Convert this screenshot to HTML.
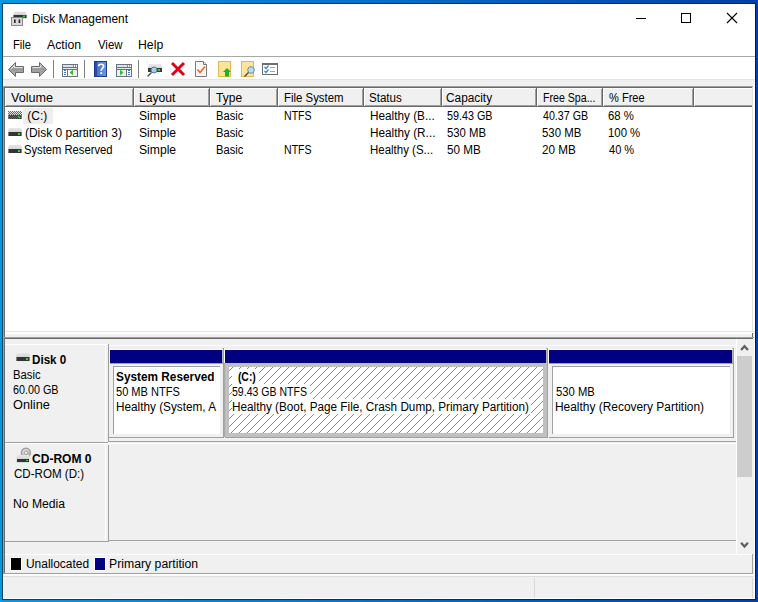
<!DOCTYPE html>
<html><head><meta charset="utf-8">
<style>
*{margin:0;padding:0;box-sizing:border-box}
html,body{width:758px;height:602px;overflow:hidden}
body{position:relative;background:linear-gradient(to right,#0898de 0%,#0674cc 45%,#0040a8 100%);font-family:"Liberation Sans",sans-serif;font-size:12px;color:#000}
.a{position:absolute}
.t{position:absolute;white-space:nowrap;line-height:15px}
.b{position:absolute;white-space:nowrap;line-height:15px;font-weight:bold}
svg{display:block}
</style></head><body>
<div class="a" style="left:2px;top:3px;width:754px;height:597px;background:#f0f0f0;border:1px solid rgba(0,0,0,0.55);background-clip:padding-box;"></div>
<div class="a" style="left:3px;top:4px;width:752px;height:595px;border:1px solid #fff;"></div>
<div class="a" style="left:3px;top:4px;width:752px;height:76px;background:#fff;"></div>
<div class="a" style="left:3px;top:56px;width:752px;height:1px;background:#a8a8a8;"></div>
<div class="a" style="left:3px;top:79px;width:752px;height:1px;background:#e3e3e3;"></div>
<svg class="a" style="left:10px;top:10px" width="18" height="17" viewBox="0 0 18 17">
<defs><linearGradient id="dt" x1="0" y1="0" x2="0" y2="1"><stop offset="0" stop-color="#e8e8e8"/><stop offset="1" stop-color="#b8b8b8"/></linearGradient></defs>
<path d="M4.5 1.5 H15.5 L16.5 3.5 V8.5 H3.5 V3.5 Z" fill="url(#dt)"/>
<rect x="3.5" y="5" width="13" height="3" fill="#333"/>
<rect x="13" y="5.5" width="2" height="2" fill="#2bd42b"/>
<rect x="1.5" y="7.5" width="11" height="8" fill="#d8d8d8" stroke="#8a8a8a" stroke-width="1"/>
<rect x="4" y="9.5" width="1.6" height="3.5" fill="#222"/>
<rect x="8.6" y="9.5" width="1.6" height="3.5" fill="#222"/>
</svg>
<div class="t" style="left:31.61px;top:12px;transform:scaleX(0.9927);transform-origin:0 0;">Disk Management</div>
<div class="a" style="left:636px;top:18px;width:10px;height:1px;background:#000;"></div>
<div class="a" style="left:681px;top:13px;width:10px;height:10px;border:1px solid #000;"></div>
<svg class="a" style="left:726px;top:12px" width="12" height="12" viewBox="0 0 12 12"><path d="M1 1L11 11M11 1L1 11" stroke="#000" stroke-width="1.1"/></svg>
<div class="t" style="left:12.67px;top:38px;transform:scaleX(0.9333);transform-origin:0 0;">File</div>
<div class="t" style="left:47.20px;top:38px;transform:scaleX(1.0212);transform-origin:0 0;">Action</div>
<div class="t" style="left:97.70px;top:38px;transform:scaleX(0.9462);transform-origin:0 0;">View</div>
<div class="t" style="left:138.18px;top:38px;transform:scaleX(1.0217);transform-origin:0 0;">Help</div>
<svg class="a" style="left:0px;top:56px" width="290" height="26" viewBox="0 56 290 26">
<defs>
<linearGradient id="ag" x1="0" y1="0" x2="0" y2="1"><stop offset="0" stop-color="#c8c8c8"/><stop offset="0.5" stop-color="#9a9a9a"/><stop offset="1" stop-color="#b8b8b8"/></linearGradient>
<linearGradient id="hb" x1="0" y1="0" x2="1" y2="0"><stop offset="0" stop-color="#3a64c8"/><stop offset="1" stop-color="#6f9ae8"/></linearGradient>
<linearGradient id="dg" x1="0" y1="0" x2="0" y2="1"><stop offset="0" stop-color="#ececec"/><stop offset="1" stop-color="#c4c4c4"/></linearGradient>
</defs>
<!-- back arrow -->
<path d="M8.5 69.5 L15.5 62.5 V66.5 H23.5 V72.5 H15.5 V76.5 Z" fill="url(#ag)" stroke="#6a6a6a" stroke-width="1" stroke-linejoin="round"/>
<path d="M10.5 69.5 L14.5 65.5 V67.5 H22.5" fill="none" stroke="#e0e0e0" stroke-width="1"/>
<!-- forward arrow -->
<path d="M46.5 69.5 L39.5 62.5 V66.5 H31.5 V72.5 H39.5 V76.5 Z" fill="url(#ag)" stroke="#6a6a6a" stroke-width="1" stroke-linejoin="round"/>
<path d="M32.5 67.5 H40.5 V65.5" fill="none" stroke="#e0e0e0" stroke-width="1"/>
<rect x="53" y="60" width="1" height="18" fill="#808080"/>
<!-- console tree icon -->
<rect x="62" y="64" width="16" height="13" fill="#6b7380"/>
<rect x="63" y="65" width="14" height="11" fill="#fff"/>
<rect x="63" y="65" width="10" height="2" fill="#dde1e6"/>
<rect x="74" y="65" width="1" height="2" fill="#fff"/><rect x="76" y="65" width="1" height="2" fill="#fff"/>
<rect x="73" y="65" width="1" height="2" fill="#8a929c"/><rect x="75" y="65" width="1" height="2" fill="#8a929c"/>
<rect x="63" y="67" width="14" height="1" fill="#6b7380"/>
<rect x="63" y="68" width="14" height="1" fill="#e4e7eb"/>
<rect x="63" y="69" width="14" height="1" fill="#6b7380"/>
<rect x="67" y="70" width="1" height="6" fill="#6b7380"/>
<rect x="64" y="70" width="2" height="1" fill="#3c78c8"/><rect x="64" y="72" width="2" height="1" fill="#3c78c8"/><rect x="64" y="74" width="2" height="1" fill="#3c78c8"/>
<rect x="74" y="70" width="3" height="6" fill="#efefef"/>
<path d="M69.5 72.5 L73 69.5 V75.5 Z" fill="#3cb83c"/>
<rect x="84" y="60" width="1" height="18" fill="#808080"/>
<!-- help book -->
<rect x="94" y="61" width="13" height="16" fill="url(#hb)"/>
<rect x="94.5" y="61.5" width="12" height="15" fill="none" stroke="#1c3a96"/>
<rect x="95" y="62" width="2" height="14" fill="#2a4aaa"/>
<path d="M98.6 66.2 C98.6 63.6 103.6 63.6 103.6 66.2 C103.6 68.2 101.2 68.4 101.2 70.8" fill="none" stroke="#fff" stroke-width="1.7"/>
<rect x="100.3" y="72.2" width="1.8" height="1.8" fill="#fff"/>
<!-- details icon -->
<rect x="116" y="64" width="16" height="13" fill="#6b7380"/>
<rect x="117" y="65" width="14" height="11" fill="#fff"/>
<rect x="117" y="65" width="10" height="2" fill="#dde1e6"/>
<rect x="127" y="65" width="1" height="2" fill="#8a929c"/><rect x="129" y="65" width="1" height="2" fill="#8a929c"/>
<rect x="117" y="67" width="14" height="1" fill="#6b7380"/>
<rect x="117" y="68" width="14" height="1" fill="#e4e7eb"/>
<rect x="117" y="69" width="14" height="1" fill="#6b7380"/>
<rect x="126" y="70" width="1" height="6" fill="#6b7380"/>
<rect x="117" y="70" width="9" height="6" fill="#efefef"/>
<rect x="128" y="70" width="2" height="1" fill="#3c78c8"/><rect x="128" y="72" width="2" height="1" fill="#3c78c8"/><rect x="128" y="74" width="2" height="1" fill="#3c78c8"/>
<path d="M123.5 72.5 L120 69.5 V75.5 Z" fill="#3cb83c"/>
<rect x="138" y="60" width="1" height="18" fill="#808080"/>
<!-- disk with magnifier -->
<path d="M149 64 H161 L162 67 V72 H148 V67 Z" fill="url(#dg)"/>
<rect x="148" y="68" width="14" height="4" fill="#3a3a3a"/>
<rect x="158" y="69" width="2" height="2" fill="#22e022"/>
<circle cx="154" cy="70" r="3" fill="#a8cbe6" stroke="#5a7a9a" stroke-width="1"/>
<path d="M151.5 72.5 L147.5 76.5" stroke="#505050" stroke-width="1.4"/>
<!-- red X -->
<path d="M172 63 L184 75 M184 63 L172 75" stroke="#e00018" stroke-width="2.9" stroke-linecap="butt"/>
<!-- doc with check -->
<path d="M195.5 61.5 H203.5 L206.5 64.5 V76.5 H195.5 Z" fill="#f8f8f8" stroke="#7a7a7a"/>
<path d="M203.5 61.5 V64.5 H206.5" fill="#e0e0e0" stroke="#7a7a7a"/>
<path d="M197.5 69.5 L200 72.5 L205 66.5" fill="none" stroke="#f26522" stroke-width="1.6"/>
<!-- yellow doc with up arrow -->
<rect x="218.5" y="61.5" width="12" height="15" fill="#fde49a" stroke="#e2b94a"/>
<path d="M227 68 L231 72 H229 V76.5 H225 V72 H223 Z" fill="#1eb41e"/>
<!-- yellow doc with magnifier -->
<rect x="241.5" y="61.5" width="12" height="15" fill="#fde49a" stroke="#e2b94a"/>
<circle cx="251" cy="70" r="3.3" fill="#bcdaf0" stroke="#6a8aa8" stroke-width="1"/>
<path d="M248.5 72.5 L244.5 76.5" stroke="#505050" stroke-width="1.4"/>
<!-- checklist window -->
<rect x="262.5" y="63.5" width="15" height="11" fill="#fff" stroke="#6e6e6e"/>
<rect x="263" y="64" width="14" height="1" fill="#6e6e6e"/>
<path d="M264.5 67 L266 68.5 L268.5 65.5 M264.5 71 L266 72.5 L268.5 69.5" fill="none" stroke="#2a82dc" stroke-width="1.2"/>
<rect x="270" y="67" width="5" height="1" fill="#a0a0a0"/>
<rect x="270" y="71" width="5" height="1" fill="#a0a0a0"/>
</svg>
<div class="a" style="left:3px;top:86px;width:751px;height:1px;background:#a0a0a0;"></div>
<div class="a" style="left:3px;top:86px;width:1px;height:252px;background:#a0a0a0;"></div>
<div class="a" style="left:4px;top:87px;width:749px;height:1px;background:#696969;"></div>
<div class="a" style="left:4px;top:87px;width:1px;height:252px;background:#696969;"></div>
<div class="a" style="left:5px;top:88px;width:747px;height:243px;background:#fff;"></div>
<div class="a" style="left:5px;top:331px;width:748px;height:1px;background:#e3e3e3;"></div>
<div class="a" style="left:752px;top:87px;width:1px;height:245px;background:#e3e3e3;"></div>
<div class="a" style="left:5px;top:332px;width:749px;height:1px;background:#fff;"></div>
<div class="a" style="left:753px;top:86px;width:1px;height:247px;background:#fff;"></div>
<div class="a" style="left:5px;top:88px;width:747px;height:18px;background:#f0f0f0;"></div>
<div class="a" style="left:5px;top:88px;width:747px;height:1px;background:#fff;"></div>
<div class="a" style="left:5px;top:105px;width:747px;height:1px;background:#a0a0a0;"></div>
<div class="a" style="left:5px;top:106px;width:747px;height:1px;background:#696969;"></div>
<div class="a" style="left:5px;top:88px;width:1px;height:18px;background:#fff;"></div>
<div class="a" style="left:132px;top:89px;width:1px;height:17px;background:#a0a0a0;"></div>
<div class="a" style="left:133px;top:88px;width:1px;height:19px;background:#696969;"></div>
<div class="a" style="left:134px;top:88px;width:1px;height:18px;background:#fff;"></div>
<div class="t" style="left:11.00px;top:91px;transform:scaleX(1.0513);transform-origin:0 0;">Volume</div>
<div class="a" style="left:208px;top:89px;width:1px;height:17px;background:#a0a0a0;"></div>
<div class="a" style="left:209px;top:88px;width:1px;height:19px;background:#696969;"></div>
<div class="a" style="left:210px;top:88px;width:1px;height:18px;background:#fff;"></div>
<div class="t" style="left:139.29px;top:91px;transform:scaleX(1.0114);transform-origin:0 0;">Layout</div>
<div class="a" style="left:276px;top:89px;width:1px;height:17px;background:#a0a0a0;"></div>
<div class="a" style="left:277px;top:88px;width:1px;height:19px;background:#696969;"></div>
<div class="a" style="left:278px;top:88px;width:1px;height:18px;background:#fff;"></div>
<div class="t" style="left:216.10px;top:91px;transform:scaleX(1.0000);transform-origin:0 0;">Type</div>
<div class="a" style="left:362px;top:89px;width:1px;height:17px;background:#a0a0a0;"></div>
<div class="a" style="left:363px;top:88px;width:1px;height:19px;background:#696969;"></div>
<div class="a" style="left:364px;top:88px;width:1px;height:18px;background:#fff;"></div>
<div class="t" style="left:283.65px;top:91px;transform:scaleX(0.9508);transform-origin:0 0;">File System</div>
<div class="a" style="left:440px;top:89px;width:1px;height:17px;background:#a0a0a0;"></div>
<div class="a" style="left:441px;top:88px;width:1px;height:19px;background:#696969;"></div>
<div class="a" style="left:442px;top:88px;width:1px;height:18px;background:#fff;"></div>
<div class="t" style="left:369.24px;top:91px;transform:scaleX(0.9636);transform-origin:0 0;">Status</div>
<div class="a" style="left:535px;top:89px;width:1px;height:17px;background:#a0a0a0;"></div>
<div class="a" style="left:536px;top:88px;width:1px;height:19px;background:#696969;"></div>
<div class="a" style="left:537px;top:88px;width:1px;height:18px;background:#fff;"></div>
<div class="t" style="left:446.41px;top:91px;transform:scaleX(0.9870);transform-origin:0 0;">Capacity</div>
<div class="a" style="left:601px;top:89px;width:1px;height:17px;background:#a0a0a0;"></div>
<div class="a" style="left:602px;top:88px;width:1px;height:19px;background:#696969;"></div>
<div class="a" style="left:603px;top:88px;width:1px;height:18px;background:#fff;"></div>
<div class="t" style="left:542.82px;top:91px;transform:scaleX(0.8847);transform-origin:0 0;">Free Spa...</div>
<div class="a" style="left:692px;top:89px;width:1px;height:17px;background:#a0a0a0;"></div>
<div class="a" style="left:693px;top:88px;width:1px;height:19px;background:#696969;"></div>
<div class="a" style="left:694px;top:88px;width:1px;height:18px;background:#fff;"></div>
<div class="t" style="left:608.78px;top:91px;transform:scaleX(0.9216);transform-origin:0 0;">% Free</div>
<div class="a" style="left:23px;top:108px;width:30px;height:16px;background:#eeeeee;"></div>
<div class="t" style="left:24.00px;top:109px;transform:scaleX(1.0000);transform-origin:0 0;">&nbsp;(C:)</div>
<div class="t" style="left:139.39px;top:109px;transform:scaleX(1.0114);transform-origin:0 0;">Simple</div>
<div class="t" style="left:215.67px;top:109px;transform:scaleX(0.9286);transform-origin:0 0;">Basic</div>
<div class="t" style="left:283.72px;top:109px;transform:scaleX(0.8800);transform-origin:0 0;">NTFS</div>
<div class="t" style="left:369.82px;top:109px;transform:scaleX(0.9813);transform-origin:0 0;">Healthy (B...</div>
<div class="t" style="left:446.60px;top:109px;transform:scaleX(0.8980);transform-origin:0 0;">59.43 GB</div>
<div class="t" style="left:543.00px;top:109px;transform:scaleX(0.8880);transform-origin:0 0;">40.37 GB</div>
<div class="t" style="left:608.25px;top:109px;transform:scaleX(0.9462);transform-origin:0 0;">68 %</div>
<div class="t" style="left:24.50px;top:126px;transform:scaleX(0.9958);transform-origin:0 0;">(Disk 0 partition 3)</div>
<div class="t" style="left:139.39px;top:126px;transform:scaleX(1.0114);transform-origin:0 0;">Simple</div>
<div class="t" style="left:215.67px;top:126px;transform:scaleX(0.9286);transform-origin:0 0;">Basic</div>
<div class="t" style="left:369.82px;top:126px;transform:scaleX(0.9813);transform-origin:0 0;">Healthy (R...</div>
<div class="t" style="left:446.56px;top:126px;transform:scaleX(0.9450);transform-origin:0 0;">530 MB</div>
<div class="t" style="left:542.05px;top:126px;transform:scaleX(0.9500);transform-origin:0 0;">530 MB</div>
<div class="t" style="left:608.05px;top:126px;transform:scaleX(0.9469);transform-origin:0 0;">100 %</div>
<div class="t" style="left:24.47px;top:143px;transform:scaleX(0.9344);transform-origin:0 0;">System Reserved</div>
<div class="t" style="left:139.39px;top:143px;transform:scaleX(1.0114);transform-origin:0 0;">Simple</div>
<div class="t" style="left:215.67px;top:143px;transform:scaleX(0.9286);transform-origin:0 0;">Basic</div>
<div class="t" style="left:283.72px;top:143px;transform:scaleX(0.8800);transform-origin:0 0;">NTFS</div>
<div class="t" style="left:369.84px;top:143px;transform:scaleX(0.9562);transform-origin:0 0;">Healthy (S...</div>
<div class="t" style="left:446.53px;top:143px;transform:scaleX(0.9727);transform-origin:0 0;">50 MB</div>
<div class="t" style="left:542.02px;top:143px;transform:scaleX(0.9758);transform-origin:0 0;">20 MB</div>
<div class="t" style="left:609.00px;top:143px;transform:scaleX(0.9185);transform-origin:0 0;">40 %</div>
<svg width="0" height="0" style="position:absolute"><defs>
<linearGradient id="dg2" x1="0" y1="0" x2="0" y2="1"><stop offset="0" stop-color="#e6e6e6"/><stop offset="1" stop-color="#c8c8c8"/></linearGradient>
<pattern id="chk" width="2" height="2" patternUnits="userSpaceOnUse"><rect x="0" y="0" width="1" height="1" fill="#1e7ad8"/><rect x="1" y="1" width="1" height="1" fill="#1e7ad8"/></pattern>
</defs></svg>
<svg class="a" style="left:8px;top:111px" width="14" height="9" viewBox="0 0 14 9">
<path d="M1 0 H13 L14 3 V8 H0 V3 Z" fill="url(#dg2)"/>
<rect x="0.5" y="4" width="13" height="4" fill="#343434"/>
<rect x="10" y="5" width="2" height="2" fill="#22e022"/>
</svg>
<svg class="a" style="left:8px;top:111px" width="14" height="8"><rect width="14" height="8" fill="url(#chk)"/></svg>
<svg class="a" style="left:8px;top:128px" width="14" height="9" viewBox="0 0 14 9">
<path d="M1 0 H13 L14 3 V8 H0 V3 Z" fill="url(#dg2)"/>
<rect x="0.5" y="4" width="13" height="4" fill="#343434"/>
<rect x="10" y="5" width="2" height="2" fill="#22e022"/>
</svg>
<svg class="a" style="left:8px;top:145px" width="14" height="9" viewBox="0 0 14 9">
<path d="M1 0 H13 L14 3 V8 H0 V3 Z" fill="url(#dg2)"/>
<rect x="0.5" y="4" width="13" height="4" fill="#343434"/>
<rect x="10" y="5" width="2" height="2" fill="#22e022"/>
</svg>
<div class="a" style="left:5px;top:333px;width:748px;height:1px;background:#fff;"></div>
<div class="a" style="left:752px;top:333px;width:1px;height:5px;background:#696969;"></div>
<div class="a" style="left:3px;top:337px;width:751px;height:1px;background:#a0a0a0;"></div>
<div class="a" style="left:3px;top:337px;width:1px;height:238px;background:#a0a0a0;"></div>
<div class="a" style="left:4px;top:338px;width:749px;height:1px;background:#696969;"></div>
<div class="a" style="left:4px;top:338px;width:1px;height:236px;background:#696969;"></div>
<div class="a" style="left:5px;top:344px;width:103px;height:1px;background:#fff;"></div>
<div class="a" style="left:105px;top:344px;width:1px;height:98px;background:#fff;"></div>
<div class="a" style="left:108px;top:344px;width:1px;height:98px;background:#a0a0a0;"></div>
<div class="a" style="left:108px;top:445px;width:1px;height:96px;background:#a0a0a0;"></div>
<div class="a" style="left:5px;top:442px;width:103px;height:1px;background:#a0a0a0;"></div>
<div class="a" style="left:109px;top:345px;width:627px;height:1px;background:#fff;"></div>
<div class="a" style="left:109px;top:441px;width:627px;height:1px;background:#a0a0a0;"></div>
<svg class="a" style="left:16px;top:353px" width="14" height="9" viewBox="0 0 14 9">
<path d="M1 0 H13 L14 3 V8 H0 V3 Z" fill="url(#dg2)"/>
<rect x="0.5" y="4" width="13" height="4" fill="#343434"/>
<rect x="10" y="5" width="2" height="2" fill="#22e022"/>
</svg>
<div class="b" style="left:32.03px;top:353px;transform:scaleX(0.9706);transform-origin:0 0;">Disk 0</div>
<div class="t" style="left:13.06px;top:368px;transform:scaleX(0.9429);transform-origin:0 0;">Basic</div>
<div class="t" style="left:13.10px;top:383px;transform:scaleX(0.8980);transform-origin:0 0;">60.00 GB</div>
<div class="t" style="left:12.94px;top:398px;transform:scaleX(1.0606);transform-origin:0 0;">Online</div>
<div class="a" style="left:110px;top:350px;width:112px;height:13px;background:#000080;"></div>
<div class="a" style="left:222px;top:348px;width:1px;height:15px;background:#b4b4b4;"></div>
<div class="a" style="left:223px;top:348px;width:1px;height:90px;background:#a0a0a0;"></div>
<div class="a" style="left:110px;top:437px;width:114px;height:1px;background:#a0a0a0;"></div>
<div class="a" style="left:110px;top:363px;width:113px;height:1px;background:#a0a0a0;"></div>
<div class="a" style="left:224px;top:348px;width:1px;height:15px;background:#fff;"></div>
<div class="a" style="left:110px;top:349px;width:113px;height:1px;background:#fff;"></div>
<div class="a" style="left:113px;top:366px;width:107px;height:68px;background:#fff;border-top:1px solid #a0a0a0;border-left:1px solid #a0a0a0;"></div>
<div class="a" style="left:109px;top:437px;width:1px;height:1px;background:#a0a0a0;"></div>
<div class="a" style="left:225px;top:350px;width:321px;height:13px;background:#000080;"></div>
<div class="a" style="left:546px;top:348px;width:1px;height:15px;background:#b4b4b4;"></div>
<div class="a" style="left:547px;top:348px;width:1px;height:90px;background:#a0a0a0;"></div>
<div class="a" style="left:225px;top:437px;width:323px;height:1px;background:#a0a0a0;"></div>
<div class="a" style="left:225px;top:363px;width:322px;height:1px;background:#a0a0a0;"></div>
<div class="a" style="left:548px;top:348px;width:1px;height:15px;background:#fff;"></div>
<div class="a" style="left:225px;top:349px;width:322px;height:1px;background:#fff;"></div>
<div class="a" style="left:224px;top:363px;width:323px;height:74px;background:#c0c0c0;"></div>
<div class="a" style="left:224px;top:363px;width:1px;height:74px;background:#a8a8a8;"></div>
<div class="a" style="left:549px;top:350px;width:183px;height:13px;background:#000080;"></div>
<div class="a" style="left:732px;top:348px;width:1px;height:15px;background:#b4b4b4;"></div>
<div class="a" style="left:733px;top:348px;width:1px;height:90px;background:#a0a0a0;"></div>
<div class="a" style="left:549px;top:437px;width:185px;height:1px;background:#a0a0a0;"></div>
<div class="a" style="left:549px;top:363px;width:184px;height:1px;background:#a0a0a0;"></div>
<div class="a" style="left:734px;top:348px;width:1px;height:15px;background:#fff;"></div>
<div class="a" style="left:549px;top:349px;width:184px;height:1px;background:#fff;"></div>
<div class="a" style="left:552px;top:366px;width:178px;height:68px;background:#fff;border-top:1px solid #a0a0a0;border-left:1px solid #a0a0a0;"></div>
<svg class="a" style="left:229px;top:367px" width="314" height="66" shape-rendering="crispEdges"><defs><pattern id="ht" width="8" height="8" patternUnits="userSpaceOnUse"><rect x="0" y="3" width="1" height="1" fill="#8a8a8a"/><rect x="1" y="2" width="1" height="1" fill="#8a8a8a"/><rect x="2" y="1" width="1" height="1" fill="#8a8a8a"/><rect x="3" y="0" width="1" height="1" fill="#8a8a8a"/><rect x="4" y="7" width="1" height="1" fill="#8a8a8a"/><rect x="5" y="6" width="1" height="1" fill="#8a8a8a"/><rect x="6" y="5" width="1" height="1" fill="#8a8a8a"/><rect x="7" y="4" width="1" height="1" fill="#8a8a8a"/></pattern></defs><rect width="314" height="66" fill="#fff"/><rect width="314" height="66" fill="url(#ht)"/></svg>
<div class="a" style="left:232px;top:369px;width:27px;height:15px;background:#fff;"></div>
<div class="a" style="left:232px;top:384px;width:78px;height:15px;background:#fff;"></div>
<div class="a" style="left:232px;top:399px;width:299px;height:15px;background:#fff;"></div>
<div class="b" style="left:116.12px;top:370px;transform:scaleX(0.9847);transform-origin:0 0;">System Reserved</div>
<div class="t" style="left:116.08px;top:385px;transform:scaleX(0.9206);transform-origin:0 0;">50 MB NTFS</div>
<div class="t" style="left:116.02px;top:400px;transform:scaleX(0.9802);transform-origin:0 0;">Healthy (System, A</div>
<div class="b" style="left:235.03px;top:370px;transform:scaleX(0.8684);transform-origin:0 0;">&nbsp;(C:)</div>
<div class="t" style="left:231.82px;top:385px;transform:scaleX(0.8774);transform-origin:0 0;">59.43 GB NTFS</div>
<div class="t" style="left:231.52px;top:400px;transform:scaleX(0.9785);transform-origin:0 0;">Healthy (Boot, Page File, Crash Dump, Primary Partition)</div>
<div class="t" style="left:555.86px;top:385px;transform:scaleX(0.9375);transform-origin:0 0;">530 MB</div>
<div class="t" style="left:555.01px;top:400px;transform:scaleX(0.9932);transform-origin:0 0;">Healthy (Recovery Partition)</div>
<div class="a" style="left:5px;top:443px;width:731px;height:1px;background:#fff;"></div>
<div class="a" style="left:5px;top:541px;width:104px;height:1px;background:#a0a0a0;"></div>
<div class="a" style="left:105px;top:443px;width:1px;height:98px;background:#fff;"></div>
<div class="a" style="left:109px;top:540px;width:627px;height:1px;background:#a0a0a0;"></div>
<svg class="a" style="left:16px;top:446px" width="16" height="17" viewBox="0 -1 16 17">
<defs><radialGradient id="cdg" cx="0.4" cy="0.35" r="0.7"><stop offset="0" stop-color="#e4e4e4"/><stop offset="1" stop-color="#b0b0b0"/></radialGradient></defs>
<circle cx="9.9" cy="5.8" r="4.6" fill="url(#cdg)" stroke="#9c9c9c" stroke-width="1.2"/>
<circle cx="9.9" cy="5.8" r="1.6" fill="#fff" stroke="#9a9a9a" stroke-width="1"/>
<path d="M0.5 9 Q0.5 8 1.5 8 H12.5 Q13.5 8 13.5 9 V15.5 H0.5 Z" fill="url(#dg2)"/>
<rect x="1" y="12" width="12" height="3" fill="#343434"/>
<rect x="10" y="13" width="2" height="1" fill="#22e022"/>
</svg>
<div class="b" style="left:31.60px;top:452px;transform:scaleX(1.0034);transform-origin:0 0;">CD-ROM 0</div>
<div class="t" style="left:13.54px;top:467px;transform:scaleX(0.9648);transform-origin:0 0;">CD-ROM (D:)</div>
<div class="t" style="left:13.49px;top:497px;transform:scaleX(1.0140);transform-origin:0 0;">No Media</div>
<div class="a" style="left:736px;top:339px;width:1px;height:215px;background:#fff;"></div>
<div class="a" style="left:737px;top:339px;width:16px;height:215px;background:#f0f0f0;"></div>
<div class="a" style="left:737px;top:356px;width:15px;height:121px;background:#cdcdcd;"></div>
<svg class="a" style="left:739px;top:342px" width="12" height="10"><path d="M2.8 7.2 L5.5 4.2 L8.2 7.2" fill="none" stroke="#606060" stroke-width="2.2" stroke-linecap="square"/></svg>
<svg class="a" style="left:739px;top:540px" width="12" height="10"><path d="M2.8 3.6 L5.5 6.6 L8.2 3.6" fill="none" stroke="#606060" stroke-width="2.2" stroke-linecap="square"/></svg>
<div class="a" style="left:5px;top:554px;width:748px;height:1px;background:#fff;"></div>
<div class="a" style="left:752px;top:554px;width:1px;height:20px;background:#a0a0a0;"></div>
<div class="a" style="left:4px;top:573px;width:749px;height:1px;background:#a0a0a0;"></div>
<div class="a" style="left:10px;top:557px;width:12px;height:14px;background:#fff;"></div>
<div class="a" style="left:11px;top:558px;width:10px;height:12px;background:#000;"></div>
<div class="t" style="left:25.50px;top:557px;transform:scaleX(0.9952);transform-origin:0 0;">Unallocated</div>
<div class="a" style="left:94px;top:557px;width:12px;height:14px;background:#fff;"></div>
<div class="a" style="left:95px;top:558px;width:10px;height:12px;background:#000080;"></div>
<div class="t" style="left:109.48px;top:557px;transform:scaleX(1.0209);transform-origin:0 0;">Primary partition</div>
<div class="a" style="left:3px;top:574px;width:751px;height:1px;background:#fff;"></div>
<div class="a" style="left:3px;top:575px;width:751px;height:1px;background:#fafafa;"></div>
<div class="a" style="left:3px;top:576px;width:751px;height:1px;background:#dedede;"></div>
<div class="a" style="left:534px;top:578px;width:1px;height:20px;background:#d8d8d8;"></div>
<div class="a" style="left:752px;top:578px;width:1px;height:20px;background:#d8d8d8;"></div>
</body></html>
